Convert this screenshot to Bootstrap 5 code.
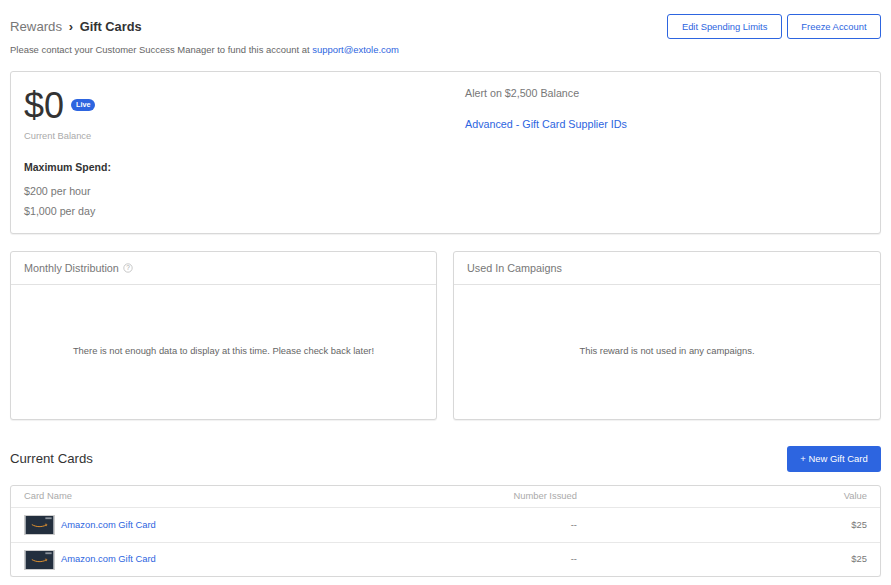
<!DOCTYPE html>
<html lang="en">
  <head>
    <meta charset="UTF-8" />
    <meta name="viewport" content="width=device-width, initial-scale=1.0" />
    <title>Gift Cards</title>
    <link
      href="https://cdn.jsdelivr.net/npm/bootstrap@5.3.0/dist/css/bootstrap.min.css"
      rel="stylesheet"
    />
    <style>
      body {
        font-family: "Liberation Sans", Arial, sans-serif;
        color: #333;
        background: #fff;
        padding: 14px 10px 0;
      }
      a {
        color: #2d65e0;
        text-decoration: none;
      }
      .page-header {
        height: 26px;
        gap: 5px;
      }
      .crumb {
        font-size: 13.2px;
        line-height: 20px;
        color: #777;
        padding-top: 3px;
      }
      .crumb strong {
        color: #333;
        font-weight: 700;
        font-size: 12.8px;
      }
      .crumb .sep {
        color: #333;
        font-size: 13px;
        font-weight: 700;
        margin: 0 3px 0 3px;
      }
      .btn-x {
        font-size: 9.4px;
        line-height: 12px;
        height: 25px;
        padding: 6px 13.5px;
        color: #2d65e0;
        border: 1px solid #2d65e0;
        border-radius: 3px;
        background: #fff;
      }
      .btn-new {
        font-size: 9.45px;
        line-height: 12px;
        height: 26px;
        width: 94px;
        padding: 6px 0;
        color: #fff;
        background: #2d65e0;
        border: 0;
        border-radius: 3px;
      }
      .fund-note {
        font-size: 9.45px;
        line-height: 12px;
        color: #666;
        margin: 4px 0 15px;
      }
      .x-card {
        border: 1px solid #d8d8d8;
        border-radius: 3px;
        box-shadow: 0 1px 1px rgba(0, 0, 0, 0.06);
        background: #fff;
      }
      .balance-card {
        height: 163px;
        padding: 11px 13px;
      }
      .balance-col {
        width: 441px;
      }
      .amount {
        font-size: 36px;
        line-height: 46px;
        color: #333;
      }
      .live {
        font-size: 7.2px;
        font-weight: 700;
        line-height: 12px;
        padding: 0 5px;
        margin-left: 7px;
        margin-bottom: 2px;
        color: #fff;
        background: #2d65e0;
        border-radius: 6px;
      }
      .caption {
        font-size: 9.3px;
        line-height: 12px;
        color: #aaa;
        margin-top: 1px;
      }
      .max-title {
        font-size: 10.5px;
        line-height: 14px;
        font-weight: 700;
        color: #333;
        margin-top: 18px;
      }
      .text-line {
        font-size: 10.7px;
        line-height: 14px;
        color: #777;
      }
      .max-line {
        margin-top: 6px;
      }
      .first-line {
        margin-top: 10px;
      }
      .alert-line {
        margin-top: 3px;
      }
      .supplier {
        display: block;
        font-size: 10.75px;
        line-height: 14px;
        margin-top: 17px;
      }
      .panels {
        margin-top: 17px;
        gap: 16px;
      }
      .panel {
        height: 169px;
        flex: 1 1 0;
        display: flex;
        flex-direction: column;
      }
      .panel:first-child {
        flex: 0 0 427px;
      }
      .panel-title {
        height: 33px;
        padding: 0 13px;
        font-size: 10.8px;
        line-height: 14px;
        color: #777;
        border-bottom: 1px solid #e2e2e2;
      }
      .panel-body-x {
        flex: 1;
        padding-bottom: 2px;
        font-size: 9.4px;
        color: #666;
      }
      .section-row {
        margin-top: 26px;
        margin-bottom: 13px;
      }
      .section-title {
        font-size: 13.2px;
        color: #333;
      }
      .cards-table {
        height: 92px;
      }
      .grid-row {
        display: grid;
        grid-template-columns: 1fr 200px 290px;
        align-items: center;
        padding: 0 13px;
        font-size: 9.4px;
      }
      .grid-head {
        height: 22px;
        color: #aaa;
        border-bottom: 1px solid #e8e8e8;
      }
      .grid-item {
        height: 34px;
        color: #777;
      }
      .grid-item + .grid-item {
        border-top: 1px solid #e8e8e8;
      }
      .gift-thumb {
        display: block;
        width: 31px;
        height: 20px;
        border: 1px solid #ccc;
        margin-right: 6px;
      }
    </style>
  </head>
  <body>
    <div class="page-header d-flex justify-content-between">
      <div class="crumb">
        Rewards <span class="sep">&rsaquo;</span> <strong>Gift Cards</strong>
      </div>
      <div class="d-flex page-header">
        <button class="btn btn-x">Edit Spending Limits</button>
        <button class="btn btn-x">Freeze Account</button>
      </div>
    </div>
    <p class="fund-note">
      Please contact your Customer Success Manager to fund this account at
      <a href="#">support@extole.com</a>
    </p>

    <div class="x-card balance-card d-flex">
      <div class="balance-col">
        <div class="d-flex align-items-center">
          <span class="amount">$0</span>
          <span class="live">Live</span>
        </div>
        <div class="caption">Current Balance</div>
        <div class="max-title">Maximum Spend:</div>
        <div class="text-line first-line">$200 per hour</div>
        <div class="text-line max-line">$1,000 per day</div>
      </div>
      <div>
        <div class="text-line alert-line">Alert on $2,500 Balance</div>
        <a class="supplier" href="#">Advanced - Gift Card Supplier IDs</a>
      </div>
    </div>

    <div class="d-flex panels">
      <div class="x-card panel">
        <div class="panel-title d-flex align-items-center gap-1">
          Monthly Distribution
          <svg width="10" height="10" viewBox="0 0 10 10">
            <circle cx="5" cy="5" r="4.2" fill="none" stroke="#bbb" stroke-width="0.8" />
            <text x="5" y="7.3" font-size="6.5" text-anchor="middle" fill="#aaa" font-family="Liberation Sans">?</text>
          </svg>
        </div>
        <div class="panel-body-x d-flex align-items-center justify-content-center">
          There is not enough data to display at this time. Please check back later!
        </div>
      </div>
      <div class="x-card panel">
        <div class="panel-title d-flex align-items-center">Used In Campaigns</div>
        <div class="panel-body-x d-flex align-items-center justify-content-center">
          This reward is not used in any campaigns.
        </div>
      </div>
    </div>

    <div class="section-row d-flex justify-content-between align-items-center">
      <div class="section-title">Current Cards</div>
      <button class="btn btn-new">+ New Gift Card</button>
    </div>

    <div class="x-card cards-table">
      <div class="grid-row grid-head">
        <div>Card Name</div>
        <div class="text-end">Number Issued</div>
        <div class="text-end">Value</div>
      </div>
      <div class="grid-row grid-item">
        <div class="d-flex align-items-center">
          <svg class="gift-thumb" viewBox="0 0 31 20">
            <rect width="31" height="20" fill="#232f3e" />
            <rect x="22" y="1.5" width="7" height="2" fill="#8a929c" />
            <path d="M7 9.5c5 3 11 3 16 .5" fill="none" stroke="#e0912f" stroke-width="1.1" />
            <path d="M21.5 9l2.2.3-.6 2" fill="none" stroke="#e0912f" stroke-width="0.8" />
          </svg>
          <a href="#">Amazon.com Gift Card</a>
        </div>
        <div class="text-end">--</div>
        <div class="text-end">$25</div>
      </div>
      <div class="grid-row grid-item">
        <div class="d-flex align-items-center">
          <svg class="gift-thumb" viewBox="0 0 31 20">
            <rect width="31" height="20" fill="#232f3e" />
            <rect x="22" y="1.5" width="7" height="2" fill="#8a929c" />
            <path d="M7 9.5c5 3 11 3 16 .5" fill="none" stroke="#e0912f" stroke-width="1.1" />
            <path d="M21.5 9l2.2.3-.6 2" fill="none" stroke="#e0912f" stroke-width="0.8" />
          </svg>
          <a href="#">Amazon.com Gift Card</a>
        </div>
        <div class="text-end">--</div>
        <div class="text-end">$25</div>
      </div>
    </div>

    <script src="https://cdn.jsdelivr.net/npm/bootstrap@5.3.0/dist/js/bootstrap.bundle.min.js"></script>
  </body>
</html>
